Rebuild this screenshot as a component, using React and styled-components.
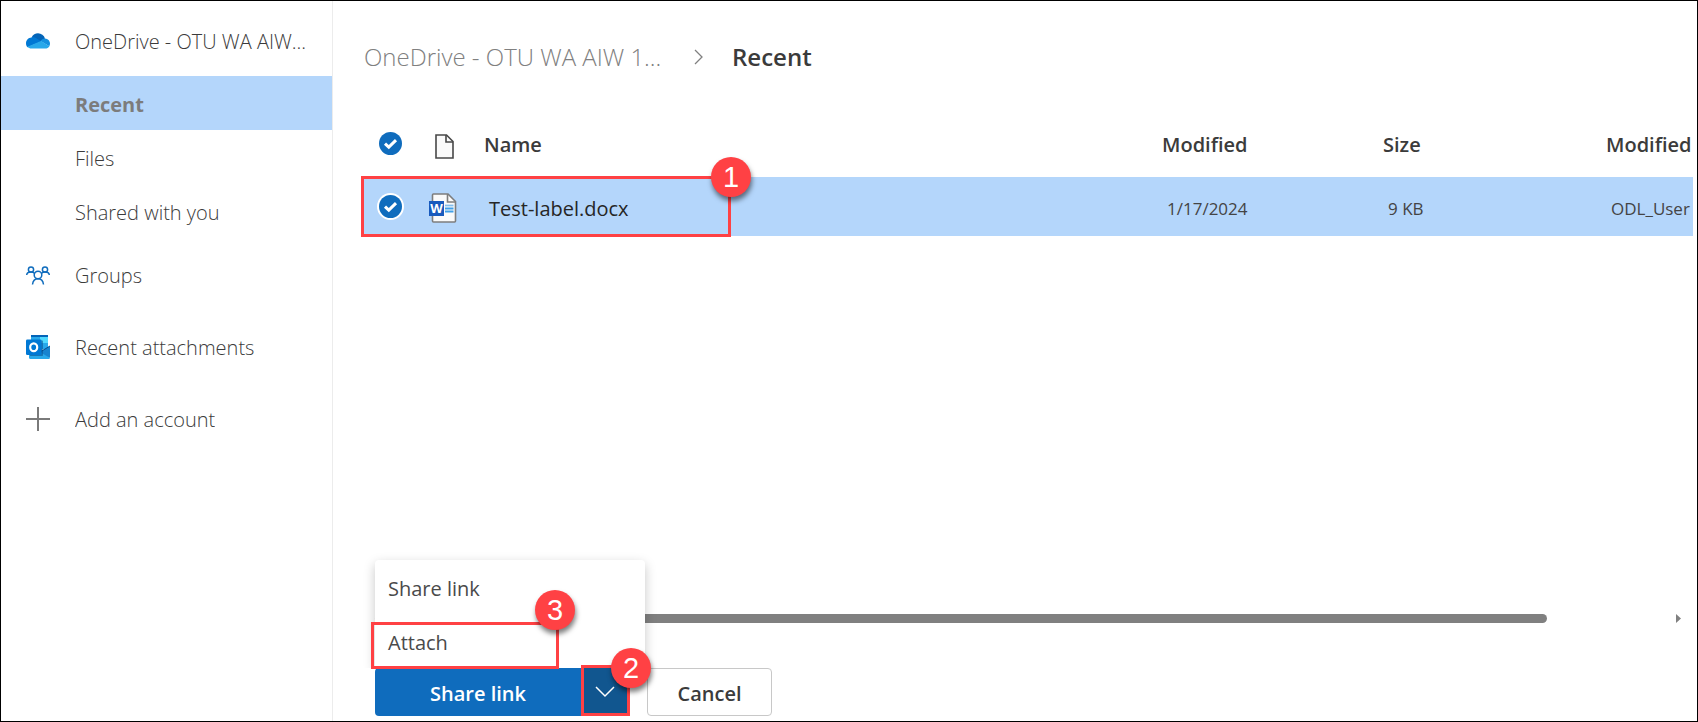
import React from "react";
import styled, { createGlobalStyle, css } from "styled-components";

const RED = "#ff4144";
const BLUE = "#0f6cbd";
const SELECTED = "#b4d6fb";

const GlobalStyle = createGlobalStyle`
  *, *::before, *::after { box-sizing: border-box; }
  body { margin: 0; background: #fff; }
  body, button, input { font-family: "Open Sans", "Noto Sans", sans-serif; }
  button { cursor: pointer; }
  svg { display: block; }
`;

const Page = styled.div`
  display: flex;
  min-height: 100vh;
  border: 1px solid #000;
  overflow: hidden;
`;

const Sidebar = styled.nav`
  flex: none;
  width: 332px;
  padding-top: 3px;
  border-right: 1px solid #ececec;
`;

const NavList = styled.ul`
  margin: 0;
  padding: 0;
  list-style: none;
`;

const NavLink = styled.a`
  display: flex;
  align-items: center;
  height: ${(p) => (p.$sub ? 54 : 72)}px;
  padding: 2px 16px 0 74px;
  font-size: 20px;
  font-weight: ${(p) => (p.$active ? 700 : 300)};
  color: ${(p) => (p.$active ? "#7c7c7c" : "#3b3b3b")};
  background: ${(p) => (p.$active ? SELECTED : "transparent")};
  text-decoration: none;
  white-space: nowrap;
  ${(p) =>
    p.$icon &&
    css`
      padding-left: 24px;
      gap: 24px;
    `}
`;

const NavIcon = styled.span`
  display: flex;
  justify-content: center;
  flex: none;
  width: 26px;
`;

const Ellipsized = styled.span`
  overflow: hidden;
  text-overflow: ellipsis;
`;

const Main = styled.main`
  flex: 1;
  min-width: 0;
  display: flex;
  flex-direction: column;
  padding: 36px 4px 5px 29px;
`;

const Breadcrumb = styled.nav`
  display: flex;
  align-items: center;
  gap: 28px;
  height: 40px;
  padding-left: 2px;
  font-size: 24px;
  line-height: 32px;
`;

const CrumbLink = styled.a`
  min-width: 302px;
  color: #808080;
  font-weight: 300;
  text-decoration: none;
`;

const CrumbCurrent = styled.span`
  color: #3b3b3b;
  font-weight: 600;
`;

const FileTable = styled.table`
  width: 100%;
  margin-top: 36px;
  table-layout: fixed;
  border-collapse: collapse;
  color: #3b3b3b;
`;

const Col = styled.col`
  width: ${(p) => (p.$width ? `${p.$width}px` : "auto")};
`;

const HeadCell = styled.th`
  height: 64px;
  padding: 0 0 2px;
  text-align: left;
  vertical-align: middle;
  font-size: 20px;
  font-weight: 600;
  white-space: nowrap;
`;

const Row = styled.tr`
  background: ${SELECTED};
`;

const Cell = styled.td`
  position: relative;
  height: 59px;
  padding: 3px 0 0 5px;
  font-size: ${(p) => (p.$name ? 20 : 17)}px;
  color: ${(p) => (p.$name ? "#262626" : "#444")};
  white-space: nowrap;
`;

const TickCell = styled(Cell)`
  padding: 0 0 0 15px;
`;

const IconCell = styled(Cell)`
  padding: 2px 0 0 11px;
`;

const TickHead = styled(HeadCell)`
  padding: 0 0 3px 15px;
`;

const IconHead = styled(HeadCell)`
  padding: 2px 0 0 17px;
`;

const TickLabel = styled.label`
  display: grid;
  width: 27px;
  height: 27px;
  > * {
    grid-area: 1 / 1;
    width: 27px;
    height: 27px;
    margin: 0;
  }
  > input {
    opacity: 0;
  }
`;

const Footer = styled.footer`
  margin-top: auto;
  padding-left: 13px;
`;

const ScrollRow = styled.div`
  display: flex;
  align-items: center;
  justify-content: space-between;
  height: 14px;
  margin-bottom: 43px;
  padding-right: 12px;
`;

const ScrollThumb = styled.div`
  flex: none;
  width: calc(100% - 134px);
  height: 9px;
  border-radius: 5px;
  background: #808080;
`;

const ButtonRow = styled.div`
  display: flex;
  gap: 18px;
`;

const SplitButton = styled.div`
  position: relative;
  display: flex;
`;

const Button = styled.button`
  height: 48px;
  padding: 2px 0 0;
  border: 0;
  font-size: 20px;
  font-weight: 600;
  ${(p) =>
    p.$primary
      ? css`
          width: 206px;
          color: #fff;
          background: ${BLUE};
          border-radius: 4px 0 0 4px;
        `
      : css`
          width: 125px;
          color: #3b3b3b;
          background: #fff;
          border: 1px solid #c8c8c8;
          border-radius: 4px;
        `}
`;

const MenuButton = styled.button`
  display: flex;
  align-items: center;
  justify-content: center;
  width: 48px;
  height: 48px;
  padding: 0;
  border: 0;
  background: #11568f;
`;

const Menu = styled.div`
  position: absolute;
  left: 0;
  bottom: 100%;
  width: 270px;
  border-radius: 4px 4px 0 0;
  background: #fff;
  box-shadow: 0 4px 12px rgba(0, 0, 0, 0.22);
  clip-path: inset(-16px -16px 0 -16px);
`;

const MenuItem = styled.button`
  display: block;
  width: 100%;
  height: 54px;
  padding: 2px 13px 0;
  border: 0;
  background: none;
  text-align: left;
  font-size: 20px;
  color: #4a4a4a;
`;

const frames = {
  file: css`left: -1px; top: -1px; width: 370px; height: 61px;`,
  attach: css`left: -4px; top: -46px; width: 188px; height: 47px;`,
  arrow: css`left: 206px; top: -3px; width: 49px; height: 51px;`,
};

const badges = {
  file: css`top: -22px; right: -23px;`,
  attach: css`top: -35px; right: -19px;`,
  arrow: css`top: -20px; right: -24px;`,
};

const Frame = styled.span`
  position: absolute;
  z-index: 2;
  border: 3px solid ${RED};
  pointer-events: none;
  ${(p) => frames[p.$on]}
`;

const Badge = styled.span`
  position: absolute;
  display: flex;
  align-items: center;
  justify-content: center;
  width: 40px;
  height: 40px;
  border-radius: 50%;
  background: ${RED};
  color: #fff;
  font: 29px/40px "Liberation Sans", Arial, sans-serif;
  box-shadow: 1px 4px 5px rgba(0, 0, 0, 0.5);
  ${(p) => badges[p.$on]}
`;

const Callout = ({ on, children }) => (
  <Frame $on={on}>
    <Badge $on={on}>{children}</Badge>
  </Frame>
);

const Tick = ({ label, ring }) => (
  <TickLabel>
    <input type="checkbox" defaultChecked aria-label={label} />
    <svg viewBox="0 0 27 27" aria-hidden="true">
      {ring && <circle cx="13.5" cy="13.5" r="13.5" fill="#fff" />}
      <circle cx="13.5" cy="13.5" r="11.5" fill={BLUE} />
      <path d="M8 13.600l3.800 3.600 7.200-7" fill="none" stroke="#fff" strokeWidth="3" />
    </svg>
  </TickLabel>
);

const OneDriveIcon = () => (
  <svg width="24" height="16" viewBox="0 0 24 16" aria-hidden="true">
    <path d="M5.5 4.5C7 1.6 9.4.3 12 .3c3.200 0 6 2.100 7 5.200l-4.500 3.500z" fill="#0364b8" />
    <path d="M5.500 4.500C8 4 9.500 4.700 11 5.700l4.500 2.800-14 5.800C.5 13.300 0 11.900 0 10.300c0-3.100 2.400-5.600 5.500-5.800z" fill="#0078d4" />
    <path d="M14.500 8c1.300-1.800 3-2.600 4.600-2.500 2.700.1 4.900 2.300 4.900 5.100 0 1-.3 1.900-.7 2.700z" fill="#1490df" />
    <path d="M1.400 13.800L15 8l8.400 5.200c-.9 1.500-2.300 2.400-4.200 2.400H5.500c-1.700 0-3.100-.6-4.100-1.800z" fill="#28a8ea" />
  </svg>
);

const GroupsIcon = () => (
  <svg width="24" height="19" viewBox="0 0 24 19" fill="none" stroke={BLUE} strokeWidth="1.500" aria-hidden="true">
    <circle cx="5" cy="3.500" r="2.600" />
    <circle cx="19" cy="3.500" r="2.600" />
    <circle cx="12" cy="9" r="3.800" />
    <path d="M.7 9c.2-1.700 1.600-2.900 4.300-2.900 1.400 0 2.500.4 3.400 1.200M23.300 9c-.2-1.700-1.600-2.900-4.300-2.900-1.400 0-2.500.4-3.400 1.200M6.500 18.500c.5-3.800 2.700-5.700 5.500-5.700s5 1.900 5.500 5.700" />
  </svg>
);

const OutlookIcon = () => (
  <svg width="24" height="24" viewBox="0 0 24 24" aria-hidden="true">
    <path d="M5 0h17v14H5z" fill="#28a8ea" />
    <path d="M5 0h17v2H5z" fill="#0364b8" />
    <path d="M14 2h8v6h-8z" fill="#50d9ff" />
    <path d="M14 8h8v5h-8z" fill="#28a8ea" />
    <path d="M3 12h11l10 11.500c-.3.300-.7.500-1.200.5H4.200C3.500 24 3 23.500 3 22.800z" fill="#28a8ea" />
    <path d="M24 11v12L13.500 16.800z" fill="#1783cf" />
    <path d="M24 11l-9 5.500" stroke="#0a4f8f" strokeWidth="1" />
    <path d="M4 5.500h12c.6 0 1 .4 1 1V20c0 .600-.400 1-1 1H4z" fill="#084b87" opacity=".55" />
    <rect x="0" y="4.500" width="15.500" height="15.500" rx="1.300" fill="#0078d4" />
    <ellipse cx="7.700" cy="12.200" rx="3.500" ry="3.900" fill="none" stroke="#fff" strokeWidth="2.200" />
  </svg>
);

const PlusIcon = () => (
  <svg width="24" height="24" viewBox="0 0 24 24" aria-hidden="true">
    <path d="M12 0v24M0 12h24" stroke="#7a7a7a" strokeWidth="2" />
  </svg>
);

const DocIcon = () => (
  <svg width="19" height="25" viewBox="0 0 19 25" aria-hidden="true">
    <path d="M1 1h10.500L18 7.500V24H1z" fill="#fafafa" stroke="#484848" strokeWidth="1.600" />
    <path d="M11 1v7h7" fill="none" stroke="#484848" strokeWidth="1.600" />
  </svg>
);

const WordIcon = () => (
  <svg width="28" height="30" viewBox="0 0 28 30" aria-hidden="true">
    <path d="M4.500 1h14.500l7.500 7.500V28c0 .600-.400 1-1 1h-21c-.600 0-1-.400-1-1V2c0-.600.400-1 1-1z" fill="#fafafa" stroke="#7d7d7d" strokeWidth="1.600" />
    <path d="M18.500 1v8h8" fill="none" stroke="#7d7d7d" strokeWidth="1.600" />
    <path d="M16 12.500h8.500" stroke="#83beec" strokeWidth="1.800" />
    <path d="M16 15.500h8.500M16 18.500h8.500" stroke="#41a0e8" strokeWidth="1.800" />
    <rect x="0" y="8" width="15" height="15" fill="#185abd" />
    <text x="7.500" y="20" textAnchor="middle" fontSize="13" fontWeight="700" fontFamily="Open Sans" fill="#fff">W</text>
  </svg>
);

const ChevronRight = () => (
  <svg width="10" height="16" viewBox="0 0 10 16" aria-hidden="true">
    <path d="M1 1l7 7-7 7" fill="none" stroke="#808080" strokeWidth="1.300" />
  </svg>
);

const ChevronDown = () => (
  <svg width="20" height="12" viewBox="0 0 20 12" aria-hidden="true">
    <path d="M1 1l9 9 9-9" fill="none" stroke="#fff" strokeWidth="1.500" />
  </svg>
);

const ScrollArrow = () => (
  <svg width="5" height="9" viewBox="0 0 5 9" aria-hidden="true">
    <path d="M0 0l5 4.500L0 9z" fill="#808080" />
  </svg>
);

const navItems = [
  { label: "OneDrive - OTU WA AIW...", Icon: OneDriveIcon },
  { label: "Recent", active: true },
  { label: "Files" },
  { label: "Shared with you" },
  { label: "Groups", Icon: GroupsIcon },
  { label: "Recent attachments", Icon: OutlookIcon },
  { label: "Add an account", Icon: PlusIcon },
];

export default function App() {
  return (
    <Page>
      <GlobalStyle />
      <Sidebar>
        <NavList>
          {navItems.map(({ label, Icon, active }) => (
            <li key={label}>
              <NavLink href="#" $sub={!Icon} $icon={!!Icon} $active={active}>
                {Icon && (
                  <NavIcon>
                    <Icon />
                  </NavIcon>
                )}
                <Ellipsized>{label}</Ellipsized>
              </NavLink>
            </li>
          ))}
        </NavList>
      </Sidebar>
      <Main>
        <Breadcrumb>
          <CrumbLink href="#">OneDrive - OTU WA AIW 1...</CrumbLink>
          <ChevronRight />
          <CrumbCurrent>Recent</CrumbCurrent>
        </Breadcrumb>
        <FileTable>
          <colgroup>
            <Col $width={56} />
            <Col $width={66} />
            <Col />
            <Col $width={221} />
            <Col $width={223} />
            <Col $width={87} />
          </colgroup>
          <thead>
            <tr>
              <TickHead>
                <Tick label="Select all files" />
              </TickHead>
              <IconHead>
                <DocIcon />
              </IconHead>
              <HeadCell>Name</HeadCell>
              <HeadCell>Modified</HeadCell>
              <HeadCell>Size</HeadCell>
              <HeadCell>Modified</HeadCell>
            </tr>
          </thead>
          <tbody>
            <Row>
              <TickCell>
                <Tick label="Select Test-label.docx" ring />
                <Callout on="file">1</Callout>
              </TickCell>
              <IconCell>
                <WordIcon />
              </IconCell>
              <Cell $name>Test-label.docx</Cell>
              <Cell>1/17/2024</Cell>
              <Cell>9 KB</Cell>
              <Cell>ODL_User</Cell>
            </Row>
          </tbody>
        </FileTable>
        <Footer>
          <ScrollRow>
            <ScrollThumb />
            <ScrollArrow />
          </ScrollRow>
          <ButtonRow>
            <SplitButton>
              <Button $primary>Share link</Button>
              <MenuButton aria-label="More share options">
                <ChevronDown />
              </MenuButton>
              <Menu>
                <MenuItem>Share link</MenuItem>
                <MenuItem>Attach</MenuItem>
              </Menu>
              <Callout on="attach">3</Callout>
              <Callout on="arrow">2</Callout>
            </SplitButton>
            <Button>Cancel</Button>
          </ButtonRow>
        </Footer>
      </Main>
    </Page>
  );
}
